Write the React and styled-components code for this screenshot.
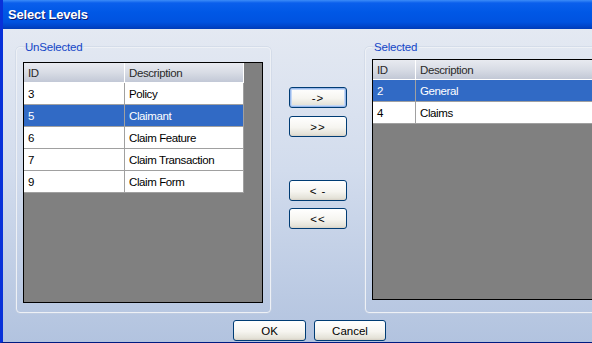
import styled, { createGlobalStyle } from "styled-components";

const GlobalStyle = createGlobalStyle`
  html, body {
    margin: 0;
    padding: 0;
    background: #fff;
  }
  body {
    font-family: "Liberation Sans", Arial, sans-serif;
    font-size: 11px;
  }
`;

const Window = styled.div`
  width: 592px;
  height: 343px;
  display: flex;
  flex-direction: column;
  overflow: hidden;
  box-sizing: border-box;
  border-left: 3px solid #0831d9;
  border-bottom: 1px solid #001a80;
  box-shadow: inset 1px 0 0 #0019a8;
`;

const TitleBar = styled.div`
  height: 29px;
  flex: none;
  display: flex;
  align-items: center;
  padding-left: 8px;
  margin-left: -3px;
  background: linear-gradient(
    to bottom,
    #3c8cf8 0px,
    #0a5fec 3px,
    #0058e6 12px,
    #0053e0 22px,
    #0046cc 26px,
    #003cb8 29px
  );
  color: #fff;
  font-weight: bold;
  font-size: 13px;
  letter-spacing: -0.2px;
  text-shadow: 1px 1px 0 #0a1a70;
`;

const Body = styled.div`
  flex: 1;
  display: flex;
  flex-direction: column;
  padding: 12px 0 0 13px;
  background: linear-gradient(to bottom, #e4e9f2 0%, #d2dced 45%, #b2c3df 100%);
`;

const MainRow = styled.div`
  display: flex;
  align-items: flex-start;
`;

const Group = styled.fieldset`
  flex: none;
  width: 254px;
  height: 272px;
  box-sizing: border-box;
  margin: 0;
  padding: ${(p) => p.$top}px 7px 0 6px;
  border: 1px solid #eef1f6;
  border-radius: 4px;
  box-shadow: 0 0 0 0.5px #c8d2e2;
`;

const Legend = styled.legend`
  margin-left: 0;
  padding: 0 2px;
  color: #1446c8;
  font-size: 11.5px;
  letter-spacing: -0.2px;
  line-height: 13px;
`;

const Grid = styled.div`
  width: 240px;
  height: 241px;
  box-sizing: border-box;
  border: 1px solid #000;
  background: #808080;
  overflow: hidden;
`;

const Row = styled.div`
  display: flex;
  width: ${(p) => p.$width}px;
  height: ${(p) => (p.$head ? 20 : 22)}px;
  box-sizing: border-box;
  border-bottom: 1px solid ${(p) => (p.$head ? "#ffffff" : "#a0a0a0")};
  background: ${(p) =>
    p.$head
      ? "linear-gradient(to bottom, #e8eaf0 0%, #d8dce5 50%, #c2c8d6 100%)"
      : p.$selected
      ? "#316ac5"
      : "#ffffff"};
  color: ${(p) => (p.$selected ? "#fff" : p.$head ? "#2a2a2a" : "#000")};
`;

const Cell = styled.div`
  flex: none;
  width: ${(p) => p.$w}px;
  box-sizing: border-box;
  display: flex;
  align-items: center;
  padding-left: 4px;
  border-right: 1px solid ${(p) => (p.$head ? "#ffffff" : "#a0a0a0")};
  white-space: nowrap;
  font-size: 11.5px;
  letter-spacing: -0.4px;
`;

const ArrowColumn = styled.div`
  flex: none;
  width: 94px;
  display: flex;
  flex-direction: column;
  align-items: center;
  padding-top: 46px;
`;

const Button = styled.button`
  width: ${(p) => p.$w || 58}px;
  height: 21px;
  margin: 0;
  margin-top: ${(p) => p.$gap || 0}px;
  padding: 0;
  box-sizing: border-box;
  border: 1px solid #003c74;
  border-radius: 3px;
  background: linear-gradient(to bottom, #ffffff 0%, #f6f5f0 55%, #e4e2d8 90%, #d6d0c5 100%);
  box-shadow: ${(p) =>
    p.$focus ? "inset 0 0 0 1px #98b8ea, inset 0 0 0 2px #c4d8f6" : "none"};
  font-family: "Liberation Sans", Arial, sans-serif;
  font-size: 11.5px;
  color: #000;
  letter-spacing: ${(p) => (p.$spaced ? "1px" : "0")};
`;

const Footer = styled.div`
  display: flex;
  gap: 8px;
  padding-left: 217px;
  margin-top: 7px;
`;

const unselected = [
  { id: "3", desc: "Policy" },
  { id: "5", desc: "Claimant", selected: true },
  { id: "6", desc: "Claim Feature" },
  { id: "7", desc: "Claim Transaction" },
  { id: "9", desc: "Claim Form" },
];

const selected = [
  { id: "2", desc: "General", selected: true },
  { id: "4", desc: "Claims" },
];

const LevelGrid = ({ rows, idWidth, descWidth }) => (
  <Grid>
    <Row $head $width={idWidth + descWidth}>
      <Cell $head $w={idWidth}>ID</Cell>
      <Cell $head $w={descWidth}>Description</Cell>
    </Row>
    {rows.map((r) => (
      <Row key={r.id} $selected={r.selected} $width={idWidth + descWidth}>
        <Cell $w={idWidth}>{r.id}</Cell>
        <Cell $w={descWidth}>{r.desc}</Cell>
      </Row>
    ))}
  </Grid>
);

export default function App() {
  return (
    <>
      <GlobalStyle />
      <Window>
        <TitleBar>Select Levels</TitleBar>
        <Body>
          <MainRow>
            <Group $top={8}>
              <Legend>UnSelected</Legend>
              <LevelGrid rows={unselected} idWidth={101} descWidth={119} />
            </Group>
            <ArrowColumn>
              <Button $focus $spaced>-&gt;</Button>
              <Button $gap={8} $spaced>&gt;&gt;</Button>
              <Button $gap={43} $spaced>&lt; -</Button>
              <Button $gap={7} $spaced>&lt;&lt;</Button>
            </ArrowColumn>
            <Group $top={5}>
              <Legend>Selected</Legend>
              <LevelGrid rows={selected} idWidth={43} descWidth={200} />
            </Group>
          </MainRow>
          <Footer>
            <Button $w={73}>OK</Button>
            <Button $w={72}>Cancel</Button>
          </Footer>
        </Body>
      </Window>
    </>
  );
}
